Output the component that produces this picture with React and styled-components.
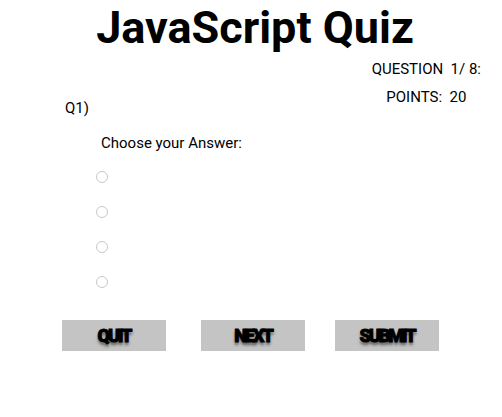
import React from "react";
import styled, { createGlobalStyle } from "styled-components";

const GlobalStyle = createGlobalStyle`
  body {
    margin: 0;
    background: #fff;
    font-family: Roboto, "Liberation Sans", sans-serif;
    color: #000;
  }
`;

const Page = styled.div`
  width: 502px;
  height: 417px;
  display: flex;
  flex-direction: column;
`;

const Title = styled.h1`
  margin: 0;
  padding: 2px 0 0 8px;
  text-align: center;
  font-size: 45px;
  font-weight: 700;
  line-height: 52px;
`;

const InfoRow = styled.div`
  display: flex;
  justify-content: space-between;
  align-items: flex-start;
  padding: 6px 21px 0 65px;
`;

const QuestionLabel = styled.div`
  font-size: 15px;
  margin-top: 39px;
`;

const Stats = styled.div`
  text-align: center;
  font-size: 15px;
  line-height: 18px;
`;

const Stat = styled.div`
  margin-bottom: ${(p) => p.gap || 0}px;
  white-space: pre;
`;

const Prompt = styled.div`
  font-size: 15px;
  margin: 17px 0 0 101px;
`;

const Options = styled.div`
  display: flex;
  flex-direction: column;
  gap: 23px;
  margin: 19px 0 0 96px;
`;

const Radio = styled.input.attrs({ type: "radio", name: "answer" })`
  appearance: none;
  width: 12px;
  height: 12px;
  margin: 0;
  border: 1px solid #c9c9c9;
  border-radius: 50%;
  background: #fff;
`;

const Buttons = styled.div`
  display: flex;
  margin: 32px 0 0 62px;
`;

const Button = styled.button`
  width: 104px;
  height: 31px;
  margin-right: ${(p) => p.gap || 0}px;
  border: none;
  background: #c4c4c4;
  font-family: Roboto, "Liberation Sans", sans-serif;
  font-weight: 900;
  font-size: 18px;
  letter-spacing: -2px;
  color: #000;
  -webkit-text-stroke: 0.9px #000;
  text-shadow: 0 3px 3px rgba(0, 0, 0, 0.55);
  padding: 0;
`;

export default function App() {
  return (
    <Page>
      <GlobalStyle />
      <Title>JavaScript Quiz</Title>
      <InfoRow>
        <QuestionLabel>Q1)</QuestionLabel>
        <Stats>
          <Stat gap={10}>QUESTION  1/ 8:</Stat>
          <Stat>POINTS:  20</Stat>
        </Stats>
      </InfoRow>
      <Prompt>Choose your Answer:</Prompt>
      <Options>
        {[0, 1, 2, 3].map((i) => (
          <Radio key={i} />
        ))}
      </Options>
      <Buttons>
        <Button gap={35}>QUIT</Button>
        <Button gap={30}>NEXT</Button>
        <Button>SUBMIT</Button>
      </Buttons>
    </Page>
  );
}
